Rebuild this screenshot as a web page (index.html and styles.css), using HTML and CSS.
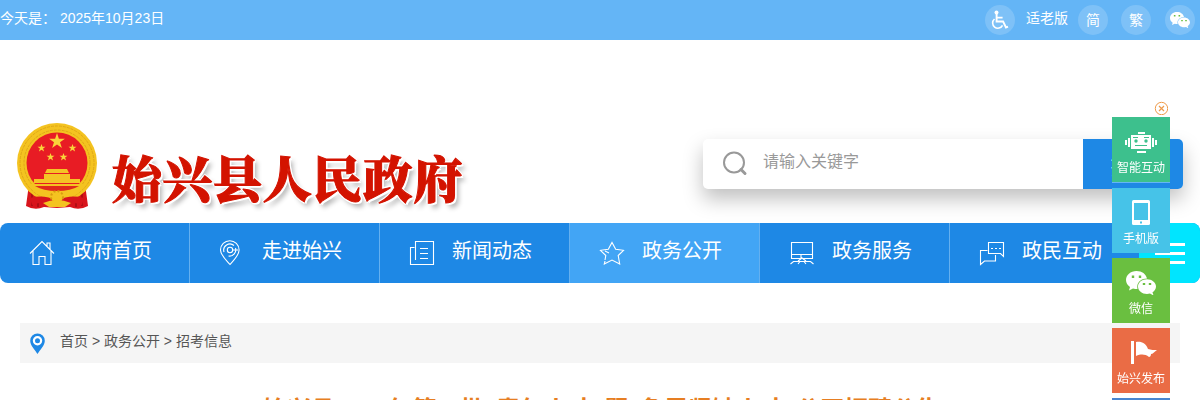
FILE: index.html
```
<!DOCTYPE html>
<html lang="zh-CN">
<head>
    <meta charset="UTF-8">
    <meta name="viewport" content="width=device-width, initial-scale=1.0">
    <title>始兴县人民政府</title>
    <link rel="stylesheet" href="styles.css">
</head>
<body>

    <!-- Top Bar -->
    <div class="top-bar">
        <div class="date">今天是： 2025年10月23日</div>
        <div class="tools">
            <a class="circle" href="#">
                <svg width="18" height="20" viewBox="0 0 18 20" fill="none" stroke="#fff" stroke-width="1.6">
                    <circle cx="5.5" cy="2.5" r="2" fill="#fff" stroke="none"/>
                    <path d="M5.600 4v7.500h6.500l2.900 6 2-.800M5.600 7.600h6" stroke-width="1.900"/>
                    <path d="M3.500 9a5.200 5.200 0 1 0 8 6.300"/>
                </svg>
            </a>
            <a class="elder" href="#">适老版</a>
            <a class="circle" href="#"><span>简</span></a>
            <a class="circle" href="#"><span>繁</span></a>
            <a class="circle last" href="#">
                <svg width="20" height="16" viewBox="0 0 30 24">
                    <use href="#wechat"/>
                </svg>
            </a>
        </div>
    </div>

    <!-- Header -->
    <header>
        <a class="logo" href="#">
            <svg class="emblem" width="82" height="88" viewBox="0 0 82 88">
                <path d="M13 62L10 84q9 5 18 1l13 1 13-1q9 4 18-1l-3-22z" fill="#d8141c"/>
                <path d="M16 70v14M22 74v11M60 74v11M66 70v14" stroke="#a30d12" stroke-width="1.5"/>
                <circle cx="41" cy="41" r="40" fill="#f4c320"/>
                <circle cx="41" cy="41" r="37" fill="none" stroke="#e0a818" stroke-width="1" stroke-dasharray="3 1"/>
                <circle cx="41" cy="41" r="33" fill="none" stroke="#e0a818" stroke-width="1" stroke-dasharray="3 1"/>
                <circle cx="41" cy="41" r="30.500" fill="#e81c24"/>
                <path d="M41 11l1.900 5.700h6l-4.900 3.600 1.900 5.800-4.900-3.600-4.900 3.600 1.900-5.800-4.900-3.600h6z" fill="#f9d43a"/>
                <g fill="#f9d43a">
                    <path id="star" d="M25.500 22l1 2.800h3l-2.400 1.800 1 3-2.600-1.800-2.600 1.800 1-3-2.400-1.800h3z"/>
                    <use href="#star" x="31"/>
                    <use href="#star" x="9" y="9"/>
                    <use href="#star" x="22" y="9"/>
                </g>
                <path d="M31 47h20l2 4H29zM28 52h26v6H28zM18 57h46v4H18z" fill="#f5c425"/>
                <path d="M13 62h56q-5 13-22 14v7H35v-7Q18 75 13 62z" fill="#f4c320"/>
                <path d="M19 64h44q-8 5-22 5t-22-5z" fill="#e02a1b"/>
                <path d="M14 76q14-4 27 3 13-7 27-3l-2 7q-13-5-25 1-12-6-25-1z" fill="#d8141c"/>
                <circle cx="41" cy="75" r="6" fill="#f4c320" stroke="#d99b10" stroke-width="2" stroke-dasharray="2 2"/>
                <path d="M27 81q14-6 28 0l-6 4H33z" fill="#f4c320"/>
            </svg>
            <span class="logo-text">始兴县人民政府</span>
        </a>
        <form class="search">
            <svg class="search-icon" width="26" height="26" viewBox="0 0 26 26" fill="none" stroke="#999">
                <circle cx="11" cy="11.500" r="10" stroke-width="2"/>
                <path d="M18 18.500l4 4" stroke-width="3" stroke-linecap="round"/>
            </svg>
            <input type="text" placeholder="请输入关键字">
            <button type="button">搜索</button>
        </form>
    </header>

    <!-- Navigation -->
    <nav>
        <a href="#">
            <svg class="nav-icon" viewBox="0 0 26 26"><path d="M1 13.500L13 1.500l12 12M4 11v13.500h6v-8h6v8h6V11M18 6V3h3v6"/></svg>
            <span>政府首页</span>
        </a>
        <a href="#">
            <svg class="nav-icon" viewBox="0 0 26 26"><path d="M11 24.500C7 20 1.500 15 1.500 10a9.300 9.300 0 0 1 18.600 0c0 5-5 10-9.100 14.500zM5 12a6.200 6.200 0 0 1 10-6.500M16.500 8a6.200 6.200 0 0 1-7 8M14 10h5"/><circle cx="11" cy="10" r="2.700"/></svg>
            <span>走进始兴</span>
        </a>
        <a href="#">
            <svg class="nav-icon" viewBox="0 0 26 26"><path d="M6.500 20V1.500h18v23h-23v-17h4M11 8.500h8M11 13.500h8M11 18.500h8"/></svg>
            <span>新闻动态</span>
        </a>
        <a class="active" href="#">
            <svg class="nav-icon" viewBox="0 0 26 26"><path d="M6 21L5.300 24l7.700-4 7.700 4-1.500-8.500 5.300-5.200-7.800-1.100L13 2.500 9.300 9.200 1.500 10.300l5.300 5.200L6 20M6 11l4 2"/></svg>
            <span>政务公开</span>
        </a>
        <a href="#">
            <svg class="nav-icon" viewBox="0 0 26 26"><path d="M2.500 18.500v-16h21v16zM2.500 14.500h21M12 15v3M9 21l4-3 4 3M1.500 24l3-2.500h17l3 2.500M9 24l2-2.500h4l2 2.500"/></svg>
            <span>政务服务</span>
        </a>
        <a href="#">
            <svg class="nav-icon" viewBox="0 0 26 26"><path d="M9.500 2.500h15v14l-3-3h-12zM8.500 10.500h-7v14l4-3.500h11v-6M12 8.500h2M16 8.500h2M20 8.500h2"/></svg>
            <span>政民互动</span>
        </a>
        <div class="menu-btn">
            <i></i>
            <i></i>
            <i></i>
        </div>
    </nav>

    <!-- Breadcrumb -->
    <div class="breadcrumb">
        <svg width="16" height="22" viewBox="0 0 16 22">
            <path d="M7.500 21C5 16.500.2 12.500.2 7.700a7.300 7.300 0 0 1 14.600 0c0 4.800-4.800 8.800-7.300 13.300z" fill="#1e88e5"/>
            <circle cx="7.500" cy="7.700" r="4.700" fill="#fff"/>
            <circle cx="7.500" cy="7.700" r="2.500" fill="#1e88e5"/>
        </svg>
        <a href="#">首页</a> &gt; <a href="#">政务公开</a> &gt; <a href="#">招考信息</a>
    </div>

    <h1>始兴县2025年第二批“青年人才”暨“急需紧缺人才”公开招聘公告</h1>

    <!-- Floating Sidebar -->
    <div class="sidebar">
        <svg class="close" width="14" height="14" viewBox="0 0 14 14" fill="none" stroke="#ee9a4a">
            <circle cx="7.500" cy="7.500" r="6.200"/>
            <path d="M5 5l5 5M10 5l-5 5" stroke-width="1.200"/>
        </svg>
        <a class="robot" href="#">
            <svg width="32" height="22" viewBox="0 0 32 22" fill="#fff">
                <path d="M13 0h7v2h-7zM6 3h20v14H6zM12 19h9v2h-9zM3 6h2v9H3zM0 8h2v5H0zM27 6h2v9h-2zM30 8h2v5h-2z"/>
                <path d="M8 5h5v1H8zM19 5h5v1h-5zM10 13h12v1H10z" fill="#3dc08d"/>
                <circle cx="11" cy="9" r="1.700" fill="#3dc08d"/>
                <circle cx="21" cy="9" r="1.700" fill="#3dc08d"/>
            </svg>
            <span>智能互动</span>
        </a>
        <a class="mobile" href="#">
            <svg width="18" height="25" viewBox="0 0 18 25">
                <rect width="18" height="25" rx="1.500" fill="#fff"/>
                <path d="M2 3h14v17H2zM8 21.500h2v2H8z" fill="#46c3e8"/>
            </svg>
            <span>手机版</span>
        </a>
        <a class="wechat" href="#">
            <svg width="30" height="24" viewBox="0 0 30 24">
                <g id="wechat">
                    <path d="M10.500 0C4.500 0 0 4 0 9c0 3 1.600 5.300 4 7l-1 3.500 4-2c1.500.5 3 .5 4.500.5C10 12 15 7.500 21 7.500 20 3 16 0 10.500 0zM30 15.500c0-4-4-7.300-9-7.300s-9 3.200-9 7.300 4 7.500 9 7.500c1 0 2-.2 3-.5l3.500 2-1-3.200c2-1.300 3.500-3.400 3.500-5.800z" fill="#fff"/>
                    <path d="M7 4.500v2.400M14 4.500v2.400M18 12v2M24 12v2" stroke="#6abf40" stroke-width="2.400"/>
                </g>
            </svg>
            <span>微信</span>
        </a>
        <a class="publish" href="#">
            <svg width="26" height="24" viewBox="0 0 26 24" fill="#fff">
                <path d="M0 0h3v23H0zM5 1c5-1 10 1 12 7 3 1 6 1 9 1-3 2-4 4-6 4 0 2-1 3-2 3-4-3-8-3-13-1z"/>
            </svg>
            <span>始兴发布</span>
        </a>
        <a class="more" href="#"></a>
    </div>

</body>
</html>
```
FILE: styles.css
```
/* General Styles */
body, html {
    margin: 0;
    padding: 0;
    height: 400px;
    overflow: hidden;
    background-color: #fff;
    font-family: "Liberation Sans", "Noto Sans CJK SC", sans-serif;
    font-size: 14px;
    color: #555;
}

a {
    color: inherit;
    text-decoration: none;
}

/* Top Bar */
.top-bar {
    height: 40px;
    background-color: #64b5f6;
    color: #fff;
    display: flex;
    justify-content: space-between;
}

.date {
    line-height: 36px;
}

.tools {
    display: flex;
    align-items: center;
    padding-right: 5px;
}

.circle {
    width: 30px;
    height: 30px;
    margin-left: 13px;
    border-radius: 50%;
    background-color: rgba(255, 255, 255, 0.17);
    display: flex;
    align-items: center;
    justify-content: center;
    font-size: 14px;
}

.circle span {
    margin-bottom: 2px;
}

.circle.last {
    margin-left: 14px;
}

.elder {
    margin: 0 -3px 6px 11px;
}

/* Header Section */
header {
    height: 183px;
    display: flex;
    justify-content: space-between;
}

.logo {
    display: flex;
    margin: 82px 0 0 16px;
}

.logo-text {
    margin: 27px 0 0 14px;
    font-family: "Noto Serif CJK SC", "Noto Sans CJK SC", serif;
    font-size: 49.5px;
    line-height: 56px;
    font-weight: 900;
    letter-spacing: 0.7px;
    color: #d31300;
    -webkit-text-stroke: 1px #d31300;
    text-shadow: -2px 0 #fff, 2px 0 #fff, 0 2px #fff, 0 -2px #fff, 2px 2px #fff, 4px 5px 5px rgba(0, 0, 0, 0.3);
}

/* Search Box */
.search {
    width: 480px;
    height: 50px;
    margin: 99px 17px 0 0;
    display: flex;
    border-radius: 5px;
    background-color: #fff;
    box-shadow: 0 10px 20px rgba(0, 0, 0, 0.25);
}

.search-icon {
    margin: 12px 0 0 20px;
}

.search input {
    flex: 1;
    min-width: 0;
    height: 46px;
    padding: 0 0 0 14px;
    border: none;
    outline: none;
    background: none;
    font-family: inherit;
    font-size: 16px;
}

.search input::placeholder {
    color: #999;
}

.search button {
    width: 100px;
    padding: 0;
    border: none;
    border-radius: 0 5px 5px 0;
    background-color: #1e88e5;
    color: #fff;
    font-family: inherit;
    font-size: 22.5px;
}

/* Navigation */
nav {
    height: 60px;
    display: flex;
    border-radius: 8px;
    overflow: hidden;
    background-color: #1e88e5;
    color: #fff;
}

nav a {
    width: 190px;
    box-sizing: border-box;
    padding-left: 29px;
    border-right: 1px solid #64b0f0;
    display: flex;
    font-size: 20px;
    line-height: 56px;
}

nav a:nth-child(6) {
    width: 189px;
    border: none;
}

nav a.active {
    background-color: #42a5f5;
}

.nav-icon {
    width: 26px;
    height: 26px;
    margin: 17px 17px 0 0;
    fill: none;
    stroke: #fff;
    stroke-width: 1.1;
}

.menu-btn {
    flex: 1;
    display: flex;
    flex-direction: column;
    align-items: flex-start;
    gap: 6px;
    padding: 20px 0 0 16px;
    background-color: #00e5ff;
}

.menu-btn i {
    width: 30px;
    height: 3px;
    background-color: #fff;
}

/* Breadcrumb */
.breadcrumb {
    height: 40px;
    margin: 40px 20px 0;
    background-color: #f5f5f5;
    line-height: 36px;
    white-space: nowrap;
}

.breadcrumb svg {
    float: left;
    margin: 10px 14px 0 10px;
}

h1 {
    margin: 29px 0 0;
    padding-left: 3px;
    font-size: 24px;
    line-height: 36px;
    font-weight: bold;
    text-align: center;
    color: #e67e22;
}

/* Floating Sidebar */
.sidebar {
    position: fixed;
    top: 101px;
    right: 30px;
    width: 58px;
    display: flex;
    flex-direction: column;
    gap: 5px;
    color: #fff;
}

.close {
    align-self: flex-end;
    margin: 0 2px -4px 0;
}

.sidebar a {
    height: 65px;
    display: flex;
    flex-direction: column;
    align-items: center;
    justify-content: flex-end;
    font-size: 12px;
    line-height: 18px;
}

.sidebar span {
    margin: 5px 0;
}

.sidebar .robot {
    margin-top: 1px;
    border-bottom: 1px solid #64b5f6;
    background-color: #3dc08d;
}

.mobile {
    background-color: #46c3e8;
}

.wechat {
    background-color: #6abf40;
}

.publish {
    background-color: #ea6c45;
}

.publish svg {
    margin-left: 6px;
}

.more {
    background-color: #4a86d0;
}
```
